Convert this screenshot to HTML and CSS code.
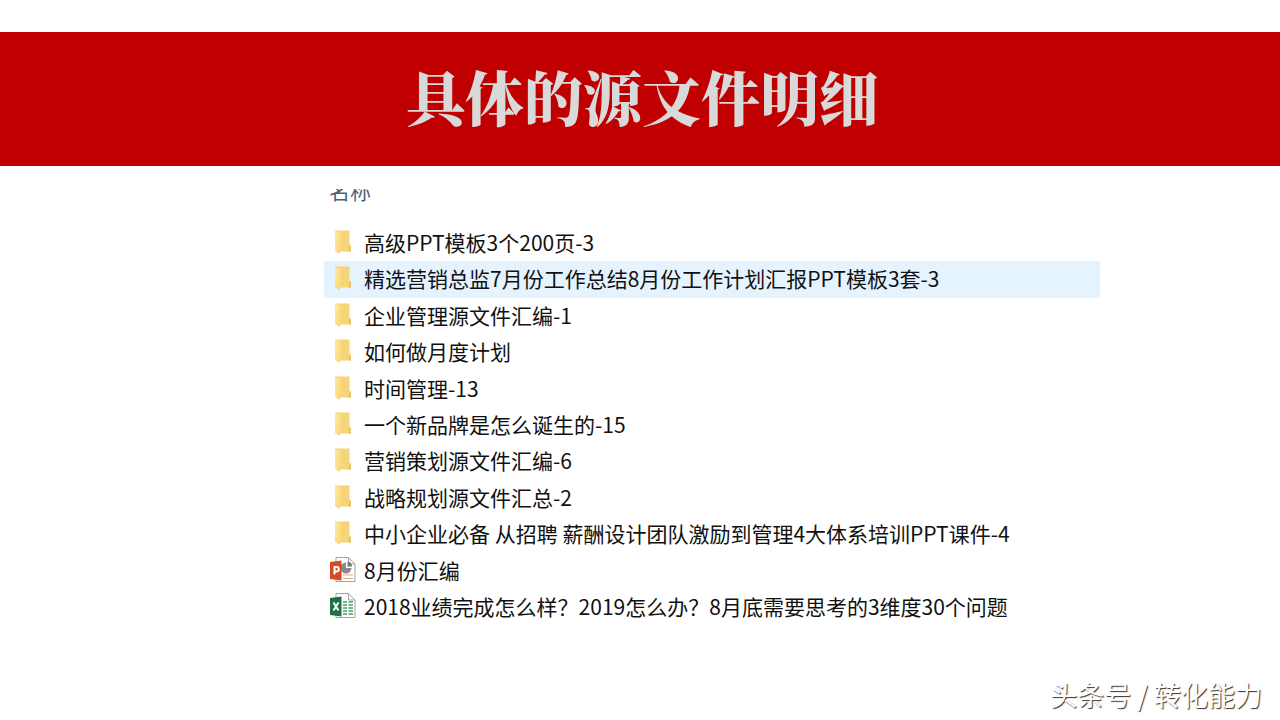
FILE: index.html
```
<!DOCTYPE html>
<html lang="zh-CN">
<head>
  <meta charset="UTF-8">
  <meta name="viewport" content="width=device-width, initial-scale=1.0">
  <title>具体的源文件明细</title>
  <link rel="stylesheet" href="styles.css">
</head>
<body>
  <svg class="symbols" aria-hidden="true">
    <defs>
      <linearGradient id="front" x1="0" y1="0" x2="1" y2="1">
        <stop offset="0" stop-color="#ffe9a6"/>
        <stop offset="1" stop-color="#fbd775"/>
      </linearGradient>
      <symbol id="folder" viewBox="0 0 28 28">
        <path d="M6 2.500H20.500V17L22 18V23.500H8z" fill="#f6d578"/>
        <path d="M20.500 17L22 18V23.500H19.500z" fill="#ecc25f"/>
        <path d="M6 2.500L11.500 5V23.500L10.500 26L6 23z" fill="url(#front)"/>
      </symbol>
      <symbol id="ppt" viewBox="0 0 28 28">
        <path d="M7 1.500H19.500L26 8V25.500H7z" fill="#fff" stroke="#a3a3a3"/>
        <path d="M19.500 1.500V8H26" fill="none" stroke="#a3a3a3"/>
        <path d="M17 6.500V12H22.500A5.500 5.500 0 1 1 17 6.500z" fill="#8a8a8a"/>
        <path d="M18.500 5.500A5 5 0 0 1 23 10.500H18.500z" fill="#777"/>
        <path d="M14 19H24M14 22.500H24" stroke="#f0a58f"/>
        <path d="M1 6L12.500 4.500V24.500L1 23z" fill="#d64a27"/>
        <path d="M5.500 18.500V11H7.500A2 2 0 0 1 7.500 15.500H5.500" fill="none" stroke="#fff" stroke-width="2"/>
      </symbol>
      <symbol id="xls" viewBox="0 0 28 28">
        <path d="M7 1.500H19.500L26 8V25.500H7z" fill="#fff" stroke="#a3a3a3"/>
        <path d="M19.500 1.500V8H26" fill="none" stroke="#a3a3a3"/>
        <path d="M14 10H18M14 13H18M14 16H18M14 19H18M14 22H18M19.500 10H24M19.500 13H24M19.500 16H24M19.500 19H24M19.500 22H24" stroke="#6fb58e" stroke-width="2"/>
        <path d="M1 6L12.500 4.500V24.500L1 23z" fill="#1e7145"/>
        <path d="M4.500 10.500L9.500 18.500M9.500 10.500L4.500 18.500" stroke="#fff" stroke-width="2"/>
      </symbol>
    </defs>
  </svg>

  <header class="banner">
    <h1>具体的源文件明细</h1>
  </header>

  <main class="explorer">
    <div class="column-name"><span>名称</span></div>
    <ul class="files">
      <li><svg class="icon"><use href="#folder"/></svg>高级PPT模板3个200页-3</li>
      <li class="selected"><svg class="icon"><use href="#folder"/></svg>精选营销总监7月份工作总结8月份工作计划汇报PPT模板3套-3</li>
      <li><svg class="icon"><use href="#folder"/></svg>企业管理源文件汇编-1</li>
      <li><svg class="icon"><use href="#folder"/></svg>如何做月度计划</li>
      <li><svg class="icon"><use href="#folder"/></svg>时间管理-13</li>
      <li><svg class="icon"><use href="#folder"/></svg>一个新品牌是怎么诞生的-15</li>
      <li><svg class="icon"><use href="#folder"/></svg>营销策划源文件汇编-6</li>
      <li><svg class="icon"><use href="#folder"/></svg>战略规划源文件汇总-2</li>
      <li><svg class="icon"><use href="#folder"/></svg>中小企业必备 从招聘 薪酬设计团队激励到管理4大体系培训PPT课件-4</li>
      <li><svg class="icon"><use href="#ppt"/></svg>8月份汇编</li>
      <li><svg class="icon"><use href="#xls"/></svg>2018业绩完成怎么样？2019怎么办？8月底需要思考的3维度30个问题</li>
    </ul>
  </main>

  <footer class="credit">头条号 / 转化能力</footer>
</body>
</html>
```
FILE: styles.css
```
* {
  box-sizing: border-box;
}
body {
  margin: 0;
  padding-top: 32px;
  min-height: 100vh;
  display: flex;
  flex-direction: column;
  background: #fff;
  color: #111;
  font-family: "Noto Sans CJK SC", sans-serif;
}
.symbols {
  position: absolute;
  width: 0;
  height: 0;
}
.banner {
  padding: 22px 0 28px;
  background: #c00000;
  text-align: center;
}
.banner h1 {
  margin: 0;
  padding-left: 4px;
  color: #d9d9d9;
  font-family: "Noto Serif CJK SC", "Noto Sans CJK SC", serif;
  font-size: 59px;
  font-weight: 900;
  line-height: 84px;
}
.explorer {
  padding: 23px 180px 0 324px;
}
/* the column title is scrolled half out of view */
.column-name {
  display: flex;
  align-items: flex-end;
  height: 14px;
  padding-left: 5px;
  overflow: hidden;
  color: #4c607a;
  font-size: 21px;
  line-height: 26px;
}
.files {
  display: grid;
  grid-auto-rows: 1fr;
  min-height: 401px;
  margin: 22px 0 0;
  padding: 0;
  list-style: none;
  font-size: 21px;
  line-height: 28px;
}
.files li {
  display: flex;
  align-items: center;
  gap: 7px;
  padding: 0 0 3px 5px;
}
.files .selected {
  background: #e5f3ff;
}
.icon {
  flex: none;
  width: 28px;
  height: 28px;
}
.credit {
  margin-top: auto;
  padding: 0 18px 5px;
  color: #fff;
  font-size: 27px;
  line-height: 40px;
  text-align: right;
  text-shadow: 1px 1px 1px #333;
  word-spacing: normal;
}
```
